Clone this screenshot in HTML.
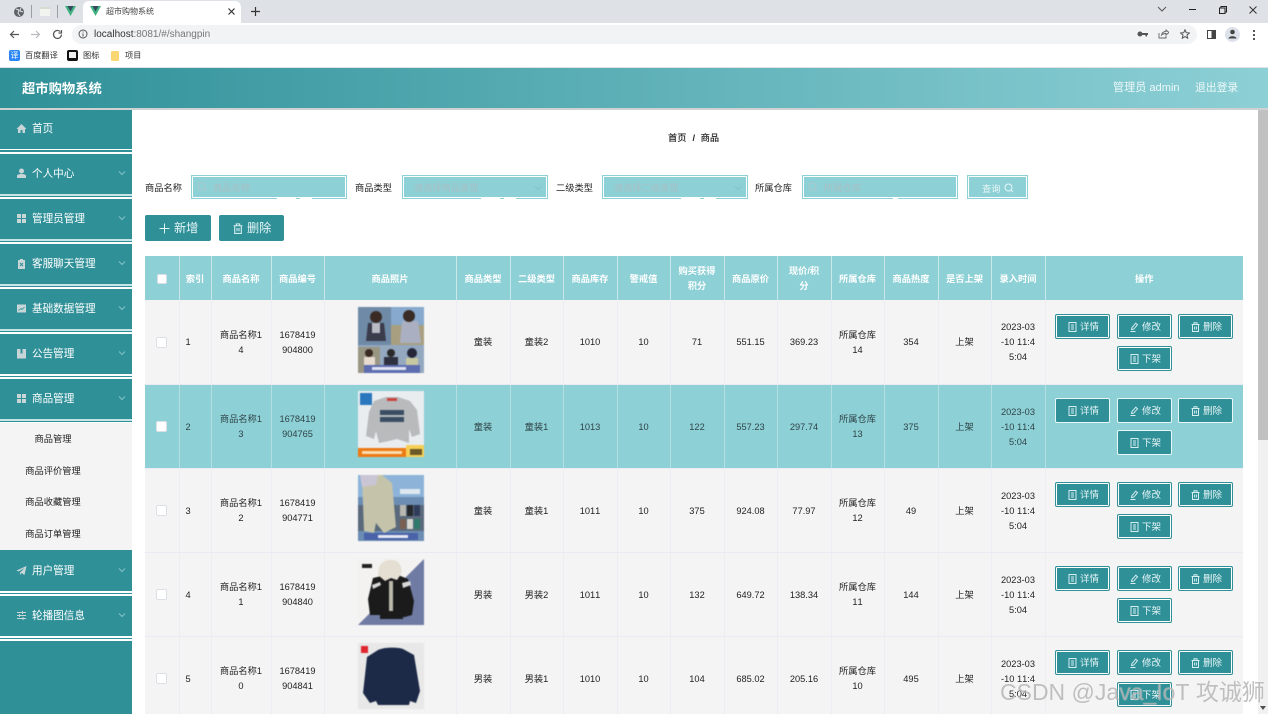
<!DOCTYPE html>
<html lang="zh"><head><meta charset="utf-8"><title>超市购物系统</title>
<style>
*{box-sizing:border-box}
html,body{margin:0;padding:0;width:1268px;height:714px;overflow:hidden;background:#fff}
body{position:relative;font-family:"Liberation Sans","Noto Sans CJK SC",sans-serif;font-size:9.25px;color:#222;font-kerning:none}
.a{position:absolute}
.t{position:absolute;white-space:nowrap;line-height:14px}
.menu{position:absolute;left:0;width:132px;height:40px;color:#fff;font-size:10.6px;line-height:42px}
.menu .l{position:absolute;left:32px;top:0;white-space:nowrap}
.menu svg.i{position:absolute;left:16px;top:15px;width:11px;height:11px}
.menu svg.c{position:absolute;left:118px;top:17px;width:8px;height:6px}
.sep{position:absolute;left:0;width:132px;height:2px;background:#fff}
.sub{position:absolute;left:0;width:132px;text-align:center;color:#222;line-height:14px;white-space:nowrap}
.inp{position:absolute;top:175px;height:24px;border:1px solid #8dd0d6;background:#8dd0d6;box-shadow:inset 0 0 0 1px #fff}
.ph{position:absolute;top:182px;color:#a9bfc3;line-height:13px;white-space:nowrap}
.gap{position:absolute;top:198px;height:2px;background:#fff}
.tb{position:absolute;left:145px;top:256px;width:1098px;border-collapse:collapse;table-layout:fixed;text-align:center;line-height:15px}
.tb th{height:44px;padding:2px 0 0;background:#8dd0d6;color:#fff;font-weight:bold;border-right:1px solid #c9e8ea;font-size:9.25px}
.tb td{height:84px;padding:2px 0 0;background:#f4f4f4;border-right:1px solid #ecedf3;border-bottom:1px solid #e9eaf4;color:#222}
.tb tr.h td{background:#8dd0d6;color:#2f4548;border-right-color:#b5e0e3;border-bottom-color:#e9eaf4}
.tb th:last-child,.tb td:last-child{border-right:0}
.tb td.idx{text-align:left;padding-left:6px}
.cb{position:absolute;left:156px;width:11px;height:11px;border:1px solid #dcdfe6;border-radius:2px;background:#fff}
.pic{position:absolute;left:358px;width:66px;height:66px;filter:blur(.5px)}
.ops{position:absolute;left:0;width:0;height:0}
.b{position:absolute;width:55px;height:25px;background:#2f9098;border:1px solid #2f9098;box-shadow:inset 0 0 0 1px #fff;border-radius:2px;color:#e6f5f6;font-size:9.5px;line-height:25px;white-space:nowrap;padding-left:24px}
.ops.h .b{border-color:#e9f6f7;box-shadow:inset 0 0 0 1px #2f9098}
.b svg{position:absolute;left:12px;top:7px;width:9px;height:10px}
.b1{left:1055px;top:14px}.b2{left:1117px;top:14px}.b3{left:1178px;top:14px}.b4{left:1117px;top:46px}
</style></head><body>
<svg width="0" height="0" style="position:absolute">
<symbol id="doc" viewBox="0 0 9 10"><rect x="1" y=".5" width="7" height="9" fill="none" stroke="#d5eef0"/><path d="M3 3h3M3 5h3M3 7h3" stroke="#d5eef0"/></symbol>
<symbol id="pen" viewBox="0 0 9 10"><path d="M1.500 7.500 2 5.500 5.800 1.200 7.500 2.800 3.600 7.200ZM.5 9.500h5" fill="none" stroke="#d5eef0"/></symbol>
<symbol id="tr" viewBox="0 0 9 10"><path d="M.5 2.500h8M3 2.500V.8h3v1.700M1.500 2.500v7h6v-7M3.600 4.500v3M5.400 4.500v3" fill="none" stroke="#d5eef0"/></symbol>
<symbol id="chev" viewBox="0 0 8 6"><path d="M1 1.500 4 4.500 7 1.500" fill="none" stroke="#86c2c7"/></symbol>
<symbol id="grid" viewBox="0 0 11 11"><path d="M1 1h4v4H1zM6 1h4v4H6zM1 6h4v4H1zM6 6h4v4H6z" fill="#c8d6d7"/></symbol>
<symbol id="p1" viewBox="0 0 66 66"><rect width="66" height="66" fill="#86a9cd"/><rect y="0" width="33" height="38" fill="#6f8aa6"/><rect x="33" y="18" width="33" height="20" fill="#a89f80"/><rect y="38" width="66" height="28" fill="#94a8c0"/><rect y="40" width="22" height="26" fill="#9a9684"/><path d="M10 16h16l2 18H8z" fill="#3a3c4c"/><path d="M14 16h8v10h-8z" fill="#b9bcc4"/><circle cx="18" cy="10" r="6" fill="#3a2c25"/><path d="M44 14h16l3 22H42z" fill="#aab0c2"/><circle cx="51" cy="9" r="6" fill="#3a2c25"/><circle cx="11" cy="46" r="4" fill="#3a2c25"/><path d="M6 50h11v8H6z" fill="#e8dcd0"/><circle cx="33" cy="46" r="4" fill="#2b2a2a"/><path d="M26 50h14v8H26z" fill="#2e3040"/><circle cx="54" cy="46" r="5" fill="#26283a"/><path d="M48 51h12v7H48z" fill="#c8c8a0"/><path d="M6 58h56v8H6z" fill="#5d6db0"/><path d="M14 60h34v3H14z" fill="#dfe3f4"/></symbol>
<symbol id="p2" viewBox="0 0 66 66"><rect width="66" height="66" fill="#e9edf0"/><rect x="2" y="2" width="12" height="12" fill="#2b77bd"/><path d="M16 10 28 6h12l12 4 7 9 3 24-8 3-3-8v14l-12-4-8 2-10 2-3-12-2 8-8-3 3-24Z" fill="#b8babc"/><path d="M22 19h24v5H22zM22 26h24v5H22z" fill="#3a4d62"/><path d="M29 7h10v3H29z" fill="#c9453f"/><rect y="57" width="48" height="9" fill="#ee7a14"/><rect x="48" y="54" width="18" height="12" fill="#f7cf56"/><path d="M4 60h40v3H4z" fill="#f9dcb0"/><path d="M52 58h12v6H52z" fill="#6b5a28"/></symbol>
<symbol id="p3" viewBox="0 0 66 66"><rect width="66" height="66" fill="#6b8db3"/><rect y="0" width="66" height="22" fill="#8db4d8"/><rect y="30" width="66" height="26" fill="#5a6a7c"/><path d="M4 0h20l10 8 4 44-12 6-8-10-2 10-10-2Z" fill="#c5c4aa"/><path d="M2 0h18l-2 10L4 12Z" fill="#c9c5d4"/><path d="M42 14h20v5H42z" fill="#dfe8f0"/><path d="M42 30h6v11h-6z" fill="#b8b8b0"/><path d="M49 30h6v11h-6z" fill="#25282c"/><path d="M56 30h6v11h-6z" fill="#2f3d5a"/><path d="M42 44h6v10h-6z" fill="#7a6050"/><path d="M49 44h6v10h-6z" fill="#d8d8d0"/><path d="M56 44h6v10h-6z" fill="#2f7a6a"/><path d="M6 58h54v7H6z" fill="#4a62a8"/><path d="M20 60h30v3H20z" fill="#e6e8f4"/></symbol>
<symbol id="p4" viewBox="0 0 66 66"><rect width="66" height="66" fill="#f3f2f0"/><path d="M66 0V66H0Z" fill="#6f7ba3"/><path d="M15 19 28 16H40L50 20 56 42 54 56 47 58H45V60H22V56L12 56 10 40Z" fill="#1b1b1c"/><path d="M20 16C20 4 26 1 33 1s12 5 10 14l-4 6-6-2-6 3Z" fill="#e4dfd2"/><path d="M31 22h4v30h-4z" fill="#bcb8aa"/><path d="M44 24l8-2 1 4-8 3zM14 26l8-3 1 3-8 4z" fill="#d8d8d8"/><path d="M4 5h10v4H4z" fill="#222"/></symbol>
<symbol id="p5" viewBox="0 0 66 66"><rect width="66" height="66" fill="#e8e8e8"/><rect x="3" y="3" width="7" height="7" fill="#e0262e"/><path d="M20 7C26 4 40 4 45 6L56 12 62 48 58 60 52 58 51 62H20L18 58 12 60 5 50 9 14Z" fill="#1c2a48"/></symbol>
</svg>

<!-- browser chrome -->
<div class="a" style="left:0;top:0;width:1268px;height:23px;background:#dee1e6"></div>
<div class="a" style="left:83px;top:1px;width:158px;height:23px;background:#fff;border-radius:6px 6px 0 0"></div>
<svg class="a" style="left:13px;top:6px" width="12" height="12" viewBox="0 0 12 12"><circle cx="6" cy="6" r="5" fill="#5f6368"/><path d="M3 3l3 1-1 3 2 3M8 2 7 5l3 1" stroke="#dee1e6" fill="none"/></svg>
<div class="a" style="left:31px;top:5px;width:1px;height:13px;background:#9aa0a6"></div>
<div class="a" style="left:40px;top:7px;width:10px;height:9px;background:#f2f4ef;border-top:2px solid #d8dcd0"></div>
<div class="a" style="left:57px;top:5px;width:1px;height:13px;background:#9aa0a6"></div>
<svg class="a" style="left:65px;top:6px" width="11" height="10" viewBox="0 0 11 10"><path d="M0 0h11L5.500 10Z" fill="#3fb27f"/><path d="M2.500 0h6L5.500 5.500Z" fill="#35495e"/></svg>
<svg class="a" style="left:90px;top:6px" width="11" height="10" viewBox="0 0 11 10"><path d="M0 0h11L5.500 10Z" fill="#3fb27f"/><path d="M2.500 0h6L5.500 5.500Z" fill="#35495e"/></svg>
<div class="t" style="left:106px;top:5px;font-size:8px;color:#444">超市购物系统</div>
<svg class="a" style="left:227px;top:7px" width="9" height="9" viewBox="0 0 9 9"><path d="M1.500 1.500l6 6M7.500 1.500l-6 6" stroke="#333" stroke-width="1.200"/></svg>
<svg class="a" style="left:250px;top:6px" width="11" height="11" viewBox="0 0 11 11"><path d="M5.500 1v9M1 5.500h9" stroke="#333" stroke-width="1.200"/></svg>
<svg class="a" style="left:1157px;top:6px" width="10" height="7" viewBox="0 0 10 7"><path d="M1 1l4 4 4-4" fill="none" stroke="#555"/></svg>
<div class="a" style="left:1189px;top:9px;width:7px;height:1px;background:#222"></div>
<svg class="a" style="left:1218px;top:5px" width="10" height="10" viewBox="0 0 10 10"><path d="M1.500 3h5.500v5.500H1.500zM3 3V1.500h5.500V7H7" fill="none" stroke="#222"/></svg>
<svg class="a" style="left:1248px;top:5px" width="10" height="10" viewBox="0 0 10 10"><path d="M1.500 1.500l7 7M8.500 1.500l-7 7" stroke="#333"/></svg>
<div class="a" style="left:0;top:23px;width:1268px;height:45px;background:#fff"></div>
<svg class="a" style="left:9px;top:29px" width="11" height="11" viewBox="0 0 11 11"><path d="M10 5.500H1.500M5 2 1.500 5.500 5 9" fill="none" stroke="#555" stroke-width="1.200"/></svg>
<svg class="a" style="left:30px;top:29px" width="11" height="11" viewBox="0 0 11 11"><path d="M1 5.500h8.500M6 2l3.500 3.500L6 9" fill="none" stroke="#b8babd" stroke-width="1.200"/></svg>
<svg class="a" style="left:52px;top:29px" width="11" height="11" viewBox="0 0 11 11"><path d="M9.500 5.500a4 4 0 1 1-1.200-2.900M9.500 1v3h-3" fill="none" stroke="#555" stroke-width="1.200"/></svg>
<div class="a" style="left:72px;top:25px;width:1125px;height:19px;background:#f1f3f4;border-radius:10px"></div>
<svg class="a" style="left:78px;top:29px" width="10" height="10" viewBox="0 0 10 10"><circle cx="5" cy="5" r="4" fill="none" stroke="#555"/><path d="M5 4.500v3M5 2.500v1" stroke="#555"/></svg>
<div class="t" style="left:94px;top:28px;font-size:10px;color:#333">localhost<span style="color:#777">:8081/#/shangpin</span></div>
<svg class="a" style="left:1137px;top:30px" width="11" height="8" viewBox="0 0 11 8"><circle cx="3" cy="4" r="2.500" fill="#555"/><path d="M5 3h6v2H10v1.500H8.500V5H5z" fill="#555"/></svg>
<svg class="a" style="left:1158px;top:29px" width="11" height="10" viewBox="0 0 11 10"><path d="M1 4v5h7V7M3.500 6c.5-2.500 2.500-3.500 4.500-3.500V1l3 2.500L8 6V4.500C6 4.500 4.500 5 3.500 6Z" fill="none" stroke="#666" stroke-width=".9"/></svg>
<svg class="a" style="left:1180px;top:29px" width="10" height="10" viewBox="0 0 10 10"><path d="M5 .8 6.300 3.700 9.400 4 7 6.100 7.700 9.200 5 7.600 2.300 9.200 3 6.100.6 4 3.700 3.700Z" fill="none" stroke="#555"/></svg>
<div class="a" style="left:1207px;top:30px;width:9px;height:9px;border:1px solid #444;background:linear-gradient(90deg,#fff 50%,#444 50%)"></div>
<div class="a" style="left:1225px;top:27px;width:15px;height:15px;background:#dde1ea;border-radius:50%"></div>
<svg class="a" style="left:1228px;top:29px" width="9" height="10" viewBox="0 0 9 10"><circle cx="4.500" cy="3" r="2.300" fill="#444"/><path d="M.5 9.500C.8 6.500 8.200 6.500 8.500 9.500Z" fill="#444"/></svg>
<div class="a" style="left:1253px;top:30px;width:2px;height:2px;background:#555;box-shadow:0 4px #555,0 8px #555"></div>
<div class="a" style="left:9px;top:50px;width:11px;height:11px;background:#2a86f5;border-radius:2px;color:#fff;font-size:8px;line-height:11px;text-align:center">译</div>
<div class="t" style="left:25px;top:49px;font-size:8.200px;color:#333">百度翻译</div>
<div class="a" style="left:67px;top:50px;width:11px;height:11px;background:#111;border-radius:2px"></div>
<div class="a" style="left:69px;top:52px;width:7px;height:6px;background:#eee"></div>
<div class="t" style="left:83px;top:49px;font-size:8.200px;color:#333">图标</div>
<div class="a" style="left:111px;top:51px;width:8px;height:10px;background:#fbd774;border-radius:1px"></div>
<div class="t" style="left:125px;top:49px;font-size:8.200px;color:#333">项目</div>
<div class="a" style="left:0;top:67px;width:1268px;height:1px;background:#e0e3e6"></div>

<!-- header -->
<div class="a" style="left:0;top:68px;width:1268px;height:40px;background:linear-gradient(90deg,#2f9098,#8dd0d6)"></div>
<div class="a" style="left:0;top:108px;width:1268px;height:2px;background:#cfd2d2"></div>
<div class="t" style="left:22px;top:80px;font-size:13.300px;font-weight:bold;color:#fff;line-height:17px">超市购物系统</div>
<div class="t" style="left:1113px;top:81px;font-size:11.100px;color:#eef9fa">管理员 admin</div>
<div class="t" style="left:1195px;top:81px;font-size:10.800px;color:#eef9fa">退出登录</div>

<!-- sidebar -->
<div class="a" style="left:0;top:110px;width:132px;height:604px;background:#2f9098"></div>
<div class="menu" style="top:108px"><svg class="i" viewBox="0 0 11 11"><path d="M5.500 1 10.500 6H9v4H6.500V7h-2v3H2V6H.5Z" fill="#c8d6d7"/></svg><span class="l">首页</span></div>
<div class="menu" style="top:153px"><svg class="i" viewBox="0 0 11 11"><circle cx="5.500" cy="3" r="2.500" fill="#c8d6d7"/><path d="M1 10V8c0-1.500 2-2 4.500-2s4.500.5 4.500 2v2Z" fill="#c8d6d7"/></svg><span class="l">个人中心</span><svg class="c"><use href="#chev"/></svg></div>
<div class="menu" style="top:198px"><svg class="i"><use href="#grid"/></svg><span class="l">管理员管理</span><svg class="c"><use href="#chev"/></svg></div>
<div class="menu" style="top:243px"><svg class="i" viewBox="0 0 11 11"><path d="M2 2h2V1h3v1h2v9H2Z" fill="#c8d6d7"/><path d="M4 5l3 3M7 5 4 8" stroke="#2f9098"/></svg><span class="l">客服聊天管理</span><svg class="c"><use href="#chev"/></svg></div>
<div class="menu" style="top:288px"><svg class="i" viewBox="0 0 11 11"><rect x="1" y="1.500" width="9" height="8" fill="#c8d6d7"/><path d="M2.500 7.500 5 5.500l1 1L8.500 4" fill="none" stroke="#2f9098" stroke-width=".8"/></svg><span class="l">基础数据管理</span><svg class="c"><use href="#chev"/></svg></div>
<div class="menu" style="top:333px"><svg class="i" viewBox="0 0 11 11"><path d="M1 1h3.500v5l1-1 1 1V1H10v9.500H1Z" fill="#c8d6d7"/></svg><span class="l">公告管理</span><svg class="c"><use href="#chev"/></svg></div>
<div class="menu" style="top:378px"><svg class="i"><use href="#grid"/></svg><span class="l">商品管理</span><svg class="c"><use href="#chev"/></svg></div>
<div class="sep" style="top:149px;height:1px"></div><div class="sep" style="top:151.500px"></div>
<div class="sep" style="top:194px;height:2px;background:#c7e4e6"></div><div class="sep" style="top:197px"></div>
<div class="sep" style="top:239px;height:2px;background:#c7e4e6"></div><div class="sep" style="top:242px"></div>
<div class="sep" style="top:284px;height:2px;background:#c7e4e6"></div><div class="sep" style="top:287px"></div>
<div class="sep" style="top:329px;height:2px;background:#c7e4e6"></div><div class="sep" style="top:332px"></div>
<div class="sep" style="top:374px;height:2px;background:#fff"></div><div class="sep" style="top:377px"></div>
<div class="sep" style="top:419px;height:1.500px;background:#c7e4e6"></div><div class="sep" style="top:421.500px;height:1.500px"></div>
<div class="a" style="left:0;top:423px;width:132px;height:127px;background:#f4f4f4"></div>
<div class="sub" style="top:432px;left:-13px">商品管理</div>
<div class="sub" style="top:464px;left:-13px">商品评价管理</div>
<div class="sub" style="top:495px;left:-13px">商品收藏管理</div>
<div class="sub" style="top:527px;left:-13px">商品订单管理</div>
<div class="menu" style="top:550px"><svg class="i" viewBox="0 0 11 11"><path d="M10.500 1 8.500 10 5.500 8 4 10V7.500L8.500 3 2.500 6.500.5 5.500Z" fill="#c8d6d7"/></svg><span class="l">用户管理</span><svg class="c"><use href="#chev"/></svg></div>
<div class="menu" style="top:595px"><svg class="i" viewBox="0 0 11 11"><path d="M1 2.500h9M1 5.500h9M1 8.500h9" stroke="#c8d6d7"/><path d="M6.500 1v3M3.500 4v3M7 7v3" stroke="#c8d6d7"/></svg><span class="l">轮播图信息</span><svg class="c"><use href="#chev"/></svg></div>
<div class="sep" style="top:591px;height:1.500px"></div><div class="sep" style="top:594px;height:1.500px"></div>
<div class="sep" style="top:636px;height:1.500px"></div><div class="sep" style="top:639px;height:1.500px"></div>

<!-- scrollbar -->
<div class="a" style="left:1258px;top:110px;width:10px;height:604px;background:#f1f1f1"></div>
<div class="a" style="left:1258px;top:110px;width:10px;height:330px;background:#c1c1c1"></div>
<svg class="a" style="left:1260px;top:706px" width="6" height="4" viewBox="0 0 6 4"><path d="M0 0h6L3 4Z" fill="#505050"/></svg>

<!-- breadcrumb -->
<div class="t" style="left:668px;top:131px;color:#222;font-weight:500">首页<b style="margin:0 5.500px 0 6px">/</b>商品</div>

<!-- search bar -->
<div class="t" style="left:145px;top:181px">商品名称</div>
<div class="inp" style="left:191px;width:156px"></div>
<svg class="a" style="left:197px;top:182px" width="10" height="10" viewBox="0 0 10 10"><circle cx="4.500" cy="4.500" r="3.500" fill="none" stroke="#aac8cc"/><path d="M7 7l2 2" stroke="#aac8cc"/></svg>
<div class="ph" style="left:213px">商品名称</div>
<div class="gap" style="left:277px;width:19px"></div><div class="gap" style="left:300px;width:12px"></div>
<div class="t" style="left:355px;top:181px">商品类型</div>
<div class="inp" style="left:402px;width:146px"></div>
<div class="ph" style="left:414px">请选择商品类型</div>
<svg class="a" style="left:534px;top:185px;width:8px;height:6px"><use href="#chev"/></svg>
<div class="gap" style="left:481px;width:19px"></div><div class="gap" style="left:504px;width:12px"></div>
<div class="t" style="left:556px;top:181px">二级类型</div>
<div class="inp" style="left:602px;width:146px"></div>
<div class="ph" style="left:614px">请选择二级类型</div>
<svg class="a" style="left:734px;top:185px;width:8px;height:6px"><use href="#chev"/></svg>
<div class="gap" style="left:681px;width:19px"></div><div class="gap" style="left:704px;width:12px"></div>
<div class="t" style="left:755px;top:181px">所属仓库</div>
<div class="inp" style="left:802px;width:156px"></div>
<svg class="a" style="left:808px;top:182px" width="10" height="10" viewBox="0 0 10 10"><circle cx="4.500" cy="4.500" r="3.500" fill="none" stroke="#aac8cc"/><path d="M7 7l2 2" stroke="#aac8cc"/></svg>
<div class="ph" style="left:824px">所属仓库</div>
<div class="gap" style="left:893px;width:5px"></div>
<div class="inp" style="left:967px;width:61px"></div>
<div class="t" style="left:982px;top:182px;color:#e8f6f7">查询</div>
<svg class="a" style="left:1004px;top:183px" width="10" height="10" viewBox="0 0 10 10"><circle cx="4.500" cy="4.500" r="3.500" fill="none" stroke="#e8f6f7"/><path d="M7 7l2 2" stroke="#e8f6f7"/></svg>

<!-- actions -->
<div class="a" style="left:145px;top:215px;width:66px;height:26px;background:#2f9098;border-radius:2px"></div>
<svg class="a" style="left:159px;top:223px" width="11" height="11" viewBox="0 0 11 11"><path d="M5.500.5v10M.5 5.500h10" stroke="#e6f5f6"/></svg>
<div class="t" style="left:174px;top:221px;font-size:12.200px;color:#e6f5f6">新增</div>
<div class="a" style="left:219px;top:215px;width:65px;height:26px;background:#2f9098;border-radius:2px"></div>
<svg class="a" style="left:233px;top:223px" width="10" height="11" viewBox="0 0 9 10"><use href="#tr"/></svg>
<div class="t" style="left:247px;top:221px;font-size:12.200px;color:#e6f5f6">删除</div>

<!-- table -->
<table class="tb">
<colgroup><col style="width:34px"><col style="width:32px"><col style="width:60px"><col style="width:53px"><col style="width:132px"><col style="width:54px"><col style="width:53px"><col style="width:54px"><col style="width:53px"><col style="width:54px"><col style="width:53px"><col style="width:54px"><col style="width:53px"><col style="width:54px"><col style="width:53px"><col style="width:54px"><col style="width:198px"></colgroup>
<tr><th></th><th>索引</th><th>商品名称</th><th>商品编号</th><th>商品照片</th><th>商品类型</th><th>二级类型</th><th>商品库存</th><th>警戒值</th><th>购买获得<br>积分</th><th>商品原价</th><th>现价/积<br>分</th><th>所属仓库</th><th>商品热度</th><th>是否上架</th><th>录入时间</th><th>操作</th></tr>
<tr><td></td><td class="idx">1</td><td>商品名称1<br>4</td><td>1678419<br>904800</td><td></td><td>童装</td><td>童装2</td><td>1010</td><td>10</td><td>71</td><td>551.15</td><td>369.23</td><td>所属仓库<br>14</td><td>354</td><td>上架</td><td>2023-03<br>-10 11:4<br>5:04</td><td></td></tr>
<tr class="h"><td></td><td class="idx">2</td><td>商品名称1<br>3</td><td>1678419<br>904765</td><td></td><td>童装</td><td>童装1</td><td>1013</td><td>10</td><td>122</td><td>557.23</td><td>297.74</td><td>所属仓库<br>13</td><td>375</td><td>上架</td><td>2023-03<br>-10 11:4<br>5:04</td><td></td></tr>
<tr><td></td><td class="idx">3</td><td>商品名称1<br>2</td><td>1678419<br>904771</td><td></td><td>童装</td><td>童装1</td><td>1011</td><td>10</td><td>375</td><td>924.08</td><td>77.97</td><td>所属仓库<br>12</td><td>49</td><td>上架</td><td>2023-03<br>-10 11:4<br>5:04</td><td></td></tr>
<tr><td></td><td class="idx">4</td><td>商品名称1<br>1</td><td>1678419<br>904840</td><td></td><td>男装</td><td>男装2</td><td>1011</td><td>10</td><td>132</td><td>649.72</td><td>138.34</td><td>所属仓库<br>11</td><td>144</td><td>上架</td><td>2023-03<br>-10 11:4<br>5:04</td><td></td></tr>
<tr><td></td><td class="idx">5</td><td>商品名称1<br>0</td><td>1678419<br>904841</td><td></td><td>男装</td><td>男装1</td><td>1010</td><td>10</td><td>104</td><td>685.02</td><td>205.16</td><td>所属仓库<br>10</td><td>495</td><td>上架</td><td>2023-03<br>-10 11:4<br>5:04</td><td></td></tr>
</table>

<div class="cb" style="left:157px;top:274px;width:10px;height:10px"></div>
<div class="cb" style="top:337px"></div>
<div class="cb" style="top:421px"></div>
<div class="cb" style="top:505px"></div>
<div class="cb" style="top:589px"></div>
<div class="cb" style="top:673px"></div>

<svg class="pic" style="top:307px"><use href="#p1"/></svg>
<svg class="pic" style="top:391px"><use href="#p2"/></svg>
<svg class="pic" style="top:475px"><use href="#p3"/></svg>
<svg class="pic" style="top:559px"><use href="#p4"/></svg>
<svg class="pic" style="top:643px"><use href="#p5"/></svg>

<div class="ops" style="top:300px">
<div class="b b1"><svg><use href="#doc"/></svg>详情</div><div class="b b2"><svg><use href="#pen"/></svg>修改</div><div class="b b3"><svg><use href="#tr"/></svg>删除</div><div class="b b4"><svg><use href="#doc"/></svg>下架</div></div>
<div class="ops h" style="top:384px">
<div class="b b1"><svg><use href="#doc"/></svg>详情</div><div class="b b2"><svg><use href="#pen"/></svg>修改</div><div class="b b3"><svg><use href="#tr"/></svg>删除</div><div class="b b4"><svg><use href="#doc"/></svg>下架</div></div>
<div class="ops" style="top:468px">
<div class="b b1"><svg><use href="#doc"/></svg>详情</div><div class="b b2"><svg><use href="#pen"/></svg>修改</div><div class="b b3"><svg><use href="#tr"/></svg>删除</div><div class="b b4"><svg><use href="#doc"/></svg>下架</div></div>
<div class="ops" style="top:552px">
<div class="b b1"><svg><use href="#doc"/></svg>详情</div><div class="b b2"><svg><use href="#pen"/></svg>修改</div><div class="b b3"><svg><use href="#tr"/></svg>删除</div><div class="b b4"><svg><use href="#doc"/></svg>下架</div></div>
<div class="ops" style="top:636px">
<div class="b b1"><svg><use href="#doc"/></svg>详情</div><div class="b b2"><svg><use href="#pen"/></svg>修改</div><div class="b b3"><svg><use href="#tr"/></svg>删除</div><div class="b b4"><svg><use href="#doc"/></svg>下架</div></div>

<!-- watermark -->
<div class="t" style="left:1000px;top:677px;font-size:23px;line-height:30px;color:rgba(130,130,130,.5);text-shadow:0 0 1px rgba(255,255,255,.8)">CSDN @Java_IoT 攻诚狮</div>
</body></html>
